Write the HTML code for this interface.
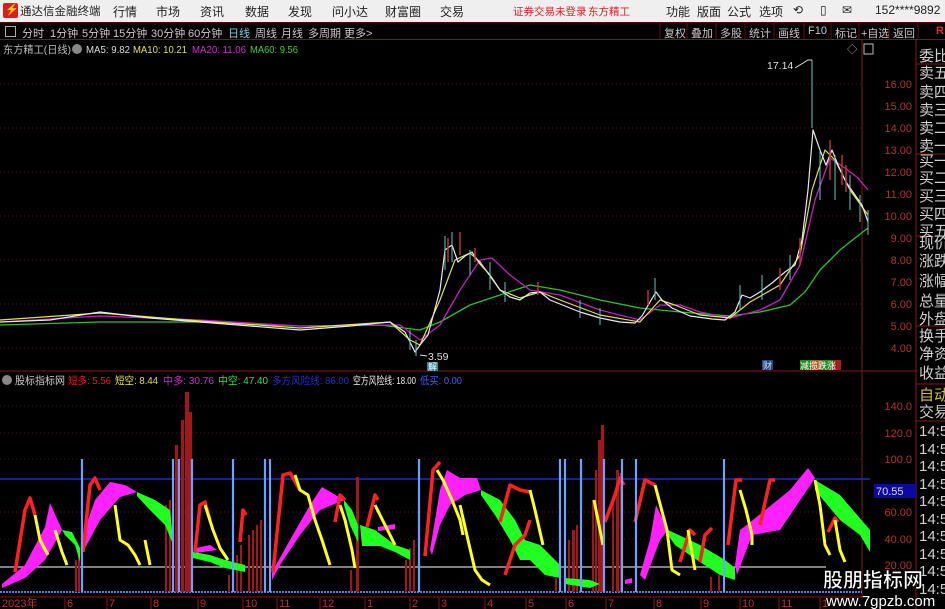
<!DOCTYPE html>
<html><head><meta charset="utf-8"><style>
*{margin:0;padding:0;box-sizing:border-box}
body{width:945px;height:609px;overflow:hidden;background:#000;font-family:"Liberation Sans","Noto Sans CJK SC",sans-serif;position:relative}
.top{position:absolute;left:0;top:0;width:945px;height:22px;background:#efefef;font-size:12px;color:#222}
.top span{position:absolute;top:3px;white-space:nowrap}
.tb{position:absolute;left:0;top:22px;width:945px;height:18px;background:#000;border-top:1px solid #600;border-bottom:1px solid #8a1010;font-size:11px;color:#c8c8c8}
.tb span{position:absolute;top:2px;white-space:nowrap}
svg{position:absolute;left:0;top:0}
</style></head><body>
<div class="top">
<div style="position:absolute;left:3px;top:3px;width:15px;height:15px;background:#d81e1e;border-radius:2px"></div>
<span style="left:5px;top:3px;color:#fff;font-weight:bold;font-size:11px">⚡</span>
<span style="left:20px;font-size:11.5px">通达信金融终端</span>
<span style="left:113px">行情</span><span style="left:156px">市场</span><span style="left:200px">资讯</span><span style="left:245px">数据</span><span style="left:288px">发现</span><span style="left:332px">问小达</span><span style="left:385px">财富圈</span><span style="left:440px">交易</span>
<span style="left:513px;color:#d82020;font-size:10.5px;top:4px">证券交易未登录</span><span style="left:588px;color:#d82020;font-size:10.5px;top:4px">东方精工</span>
<span style="left:666px">功能</span><span style="left:697px">版面</span><span style="left:727px">公式</span><span style="left:759px">选项</span>
<span style="left:793px">⟲</span><span style="left:820px">▯</span><span style="left:842px">✉</span>
<span style="left:875px">152****9892</span>
</div>
<div class="tb">
<span style="left:5px;top:3px;width:11px;height:11px;border:1px solid #aaa"></span>
<span style="left:22px">分时</span><span style="left:50px">1分钟</span><span style="left:82px">5分钟</span><span style="left:113px">15分钟</span><span style="left:151px">30分钟</span><span style="left:188px">60分钟</span><span style="left:228px;color:#7fd0e0">日线</span><span style="left:255px">周线</span><span style="left:281px">月线</span><span style="left:308px">多周期</span><span style="left:344px">更多&gt;</span>
<span style="left:664px">复权</span><span style="left:691px">叠加</span><span style="left:720px">多股</span><span style="left:749px">统计</span><span style="left:778px">画线</span><span style="left:808px">F10</span><span style="left:835px">标记</span><span style="left:861px">+自选</span><span style="left:893px">返回</span><span style="left:936px;color:#e03030;font-weight:bold">R</span>
</div>
<svg width="945" height="609" style="top:0" font-family="Liberation Sans, Noto Sans CJK SC, sans-serif">
<g stroke="#6a1010" stroke-width="1">
<line x1="660" y1="23" x2="660" y2="39"/><line x1="687" y1="23" x2="687" y2="39"/><line x1="716" y1="23" x2="716" y2="39"/><line x1="745" y1="23" x2="745" y2="39"/><line x1="774" y1="23" x2="774" y2="39"/><line x1="804" y1="23" x2="804" y2="39"/><line x1="831" y1="23" x2="831" y2="39"/><line x1="859" y1="23" x2="859" y2="39"/><line x1="889" y1="23" x2="889" y2="39"/><line x1="918" y1="23" x2="918" y2="39"/>
</g>
<g stroke="#8a1515" stroke-width="1" fill="none">
<line x1="862" y1="40" x2="862" y2="598"/><line x1="916" y1="40" x2="916" y2="609"/>
<line x1="0" y1="371" x2="916" y2="371"/><line x1="0" y1="597" x2="862" y2="597"/>
<line x1="916" y1="64" x2="945" y2="64"/><line x1="916" y1="154" x2="945" y2="154"/><line x1="916" y1="236" x2="945" y2="236"/><line x1="916" y1="326" x2="945" y2="326"/><line x1="916" y1="384" x2="945" y2="384"/><line x1="916" y1="421" x2="945" y2="421"/>
</g>
<g stroke="#5a1010" stroke-dasharray="1,3">
<line x1="0" y1="84" x2="862" y2="84"/><line x1="0" y1="128" x2="862" y2="128"/><line x1="0" y1="172" x2="862" y2="172"/><line x1="0" y1="216" x2="862" y2="216"/><line x1="0" y1="260" x2="862" y2="260"/><line x1="0" y1="304" x2="862" y2="304"/><line x1="0" y1="348" x2="862" y2="348"/>
<line x1="0" y1="406" x2="862" y2="406"/><line x1="0" y1="433" x2="862" y2="433"/><line x1="0" y1="459" x2="862" y2="459"/><line x1="0" y1="512" x2="862" y2="512"/><line x1="0" y1="539" x2="862" y2="539"/>
</g>
<g font-size="10.5">
<text x="3" y="53" fill="#bbb" textLength="68" lengthAdjust="spacingAndGlyphs">东方精工(日线)</text>
<circle cx="77" cy="49" r="5" fill="#888"/>
<text x="86" y="53" fill="#ddd" textLength="44" lengthAdjust="spacingAndGlyphs">MA5: 9.82</text>
<text x="133" y="53" fill="#e0e060" textLength="54" lengthAdjust="spacingAndGlyphs">MA10: 10.21</text>
<text x="192" y="53" fill="#d030d0" textLength="54" lengthAdjust="spacingAndGlyphs">MA20: 11.06</text>
<text x="250" y="53" fill="#40d040" textLength="48" lengthAdjust="spacingAndGlyphs">MA60: 9.56</text>
<text x="847" y="53" fill="#aaa">◇</text>
<rect x="864" y="44" width="9" height="10" fill="none" stroke="#bbb"/>
</g>
<g font-size="11" fill="#b83030" text-anchor="end">
<text x="912" y="88">16.00</text><text x="912" y="110">15.00</text><text x="912" y="132">14.00</text><text x="912" y="154">13.00</text><text x="912" y="176">12.00</text><text x="912" y="198">11.00</text><text x="912" y="220">10.00</text><text x="912" y="242">9.00</text><text x="912" y="264">8.00</text><text x="912" y="286">7.00</text><text x="912" y="308">6.00</text><text x="912" y="330">5.00</text><text x="912" y="352">4.00</text>
<text x="912" y="410">140.0</text><text x="912" y="437">120.0</text><text x="912" y="463">100.0</text><text x="912" y="516">60.00</text><text x="912" y="543">40.00</text><text x="912" y="569">20.00</text>
</g>
<rect x="874" y="484" width="42" height="14" fill="#0a0aa0"/>
<text x="876" y="495" font-size="11" fill="#ddd">70.55</text>
<g font-size="15" fill="#cfcfcf">
<text x="919" y="61">委比</text>
<text x="919" y="78">卖五</text><text x="919" y="97">卖四</text><text x="919" y="115">卖三</text><text x="919" y="133">卖二</text><text x="919" y="151">卖一</text>
<text x="919" y="166">买一</text><text x="919" y="183">买二</text><text x="919" y="201">买三</text><text x="919" y="219">买四</text><text x="919" y="236">买五</text>
<text x="919" y="248">现价</text><text x="919" y="266">涨跌</text><text x="919" y="286">涨幅</text><text x="919" y="306">总量</text><text x="919" y="324">外盘</text>
<text x="919" y="341">换手</text><text x="919" y="359">净资</text><text x="919" y="378">收益</text>
<text x="919" y="400" fill="#d0c040">自动</text><text x="919" y="417">交易</text>
<text x="919" y="436">14:56</text><text x="919" y="454">14:56</text><text x="919" y="471">14:56</text><text x="919" y="489">14:56</text><text x="919" y="506">14:56</text><text x="919" y="524">14:56</text><text x="919" y="541">14:56</text><text x="919" y="559">14:56</text><text x="919" y="576">14:56</text><text x="919" y="594">14:56</text>
</g>
<g fill="none" stroke-linejoin="round">
<polyline stroke="#30c030" stroke-width="1.3" points="0,325 100,322 200,322 300,326 380,325 420,330 440,322 470,305 500,295 530,285 560,290 600,300 640,308 680,312 730,316 760,312 790,305 805,292 820,270 840,250 855,238 868,228"/>
<polyline stroke="#c020c0" stroke-width="1.3" points="0,322 100,316 200,320 300,326 400,325 420,340 440,325 460,290 480,260 492,258 510,275 530,290 560,295 600,310 640,320 660,305 680,305 700,312 730,318 760,310 780,300 800,265 815,200 830,158 845,168 858,178 868,190"/>
<polyline stroke="#e0e050" stroke-width="1.2" points="0,320 100,313 200,321 300,328 390,322 410,340 420,345 440,300 455,260 470,253 480,262 500,290 520,298 540,292 560,300 600,315 640,322 660,300 675,305 700,315 730,318 750,302 780,285 800,255 812,190 825,150 835,160 850,190 868,215"/>
<polyline stroke="#e8e8e8" stroke-width="1.2" points="0,322 50,320 100,312 150,318 200,322 250,326 300,330 350,326 390,322 405,332 415,352 420,345 428,335 440,290 445,250 452,245 458,262 465,256 472,252 480,264 490,275 500,290 510,297 520,300 530,293 540,292 550,300 565,306 580,312 600,318 620,322 635,323 642,316 650,302 656,292 662,300 672,308 690,316 712,319 725,320 735,312 742,295 750,298 760,292 772,283 785,272 795,265 802,240 808,190 813,130 820,150 826,165 832,150 838,165 846,182 855,195 862,205 868,222"/>
<path stroke="#60c8c8" stroke-width="1" d="M812,60V128 M445,236V270 M452,232V262 M470,250V275 M490,262V290 M505,282V302 M580,300V318 M600,308V325 M655,278V300 M740,285V310 M762,275V300 M790,255V280 M820,150V200 M835,155V200 M850,175V210 M860,195V222 M868,210V235 M416,340V356 M410,330V350"/>
<path stroke="#c03030" stroke-width="1.5" d="M448,238V262 M460,232V255 M475,248V262 M538,282V295 M648,290V305 M800,238V265 M830,140V180 M842,155V185 M846,165V192 M780,268V290"/>
</g>
<g stroke="#ddd" stroke-width="1" fill="none"><polyline points="795,68 808,60 812,60"/><polyline points="420,355 427,356"/></g>
<text x="767" y="69" font-size="10.5" fill="#ddd">17.14</text>
<text x="428" y="360" font-size="10.5" fill="#ddd">3.59</text>
<rect x="427" y="362" width="11" height="9" fill="#2a8a9a"/><text x="428" y="370" font-size="9" fill="#fff">解</text>
<rect x="762" y="360" width="11" height="10" fill="#204a8a"/><text x="763" y="369" font-size="9" fill="#ddd">财</text>
<rect x="800" y="360" width="11" height="10" fill="#208a20"/><rect x="811" y="360" width="11" height="10" fill="#a06020"/><rect x="822" y="360" width="11" height="10" fill="#208a20"/><rect x="833" y="360" width="8" height="10" fill="#a02020"/>
<text x="800" y="369" font-size="9" fill="#fff">减揽跌涨</text>
<g font-size="10.5">
<circle cx="7" cy="380" r="5" fill="#888"/>
<text x="15" y="384" fill="#ccc" textLength="50" lengthAdjust="spacingAndGlyphs">股标指标网</text>
<text x="68" y="384" fill="#e02020" textLength="43" lengthAdjust="spacingAndGlyphs">短多: 5.56</text>
<text x="115" y="384" fill="#e0e050" textLength="43" lengthAdjust="spacingAndGlyphs">短空: 8.44</text>
<text x="163" y="384" fill="#d030d0" textLength="51" lengthAdjust="spacingAndGlyphs">中多: 30.76</text>
<text x="218" y="384" fill="#40e040" textLength="50" lengthAdjust="spacingAndGlyphs">中空: 47.40</text>
<text x="272" y="384" fill="#2030d0" textLength="77" lengthAdjust="spacingAndGlyphs">多方风险线: 86.00</text>
<text x="353" y="384" fill="#eee" textLength="63" lengthAdjust="spacingAndGlyphs">空方风险线: 18.00</text>
<text x="420" y="384" fill="#4060ff" textLength="42" lengthAdjust="spacingAndGlyphs">低买: 0.00</text>
</g>
<line x1="0" y1="479" x2="870" y2="479" stroke="#1830c0" stroke-width="1.5"/>
<line x1="0" y1="567" x2="826" y2="567" stroke="#ccc" stroke-width="1.2"/>
<line x1="0" y1="592" x2="862" y2="592" stroke="#5a80d0" stroke-width="2" stroke-dasharray="2,1"/>
<g fill="#a01818">
<rect x="75" y="560" width="2" height="32"/><rect x="78" y="555" width="2" height="37"/>
<rect x="165" y="505" width="2" height="87"/><rect x="169" y="500" width="2" height="92"/><rect x="175" y="445" width="3" height="147"/><rect x="181" y="420" width="3" height="172"/><rect x="185" y="392" width="4" height="200"/><rect x="189" y="412" width="3" height="180"/>
<rect x="228" y="575" width="2" height="17"/><rect x="236" y="555" width="2" height="37"/><rect x="240" y="545" width="2" height="47"/><rect x="248" y="535" width="2" height="57"/><rect x="252" y="530" width="2" height="62"/><rect x="256" y="525" width="2" height="67"/><rect x="260" y="520" width="2" height="72"/>
<rect x="356" y="477" width="3" height="115"/><rect x="350" y="570" width="2" height="22"/>
<rect x="405" y="560" width="2" height="32"/><rect x="409" y="548" width="2" height="44"/><rect x="413" y="540" width="2" height="52"/>
<rect x="555" y="578" width="2" height="14"/><rect x="568" y="540" width="2" height="52"/><rect x="572" y="530" width="3" height="62"/><rect x="576" y="525" width="2" height="67"/>
<rect x="592" y="500" width="2" height="92"/><rect x="595" y="470" width="2" height="122"/><rect x="598" y="440" width="3" height="152"/><rect x="601" y="425" width="3" height="167"/>
<rect x="612" y="500" width="2" height="92"/><rect x="616" y="470" width="3" height="122"/><rect x="620" y="473" width="2" height="119"/>
<rect x="710" y="577" width="2" height="15"/><rect x="718" y="575" width="2" height="17"/>
</g>
<g fill="#ff20ff">
<polygon points="2,584 25,565 45,527 50,503 62,530 45,560 25,578 2,588"/>
<polygon points="83,535 95,500 110,482 125,485 137,492 120,497 100,520 85,548"/>
<polygon points="196,548 210,545 217,550 196,553"/>
<polygon points="272,572 290,540 310,505 322,487 344,500 320,510 300,535 280,565 272,580"/>
<polygon points="378,527 395,524 395,529 378,531"/>
<polygon points="430,550 440,490 447,470 460,478 477,478 481,490 465,495 450,505 440,525 432,555"/>
<polygon points="625,580 632,578 632,583 625,584"/>
<polygon points="640,575 650,540 656,505 668,530 660,540 645,580"/>
<polygon points="735,565 740,530 748,524 790,490 808,468 815,478 780,530 752,535 737,575"/>
</g>
<g fill="#20ff20">
<polygon points="62,530 72,532 80,548 80,562 75,545 65,535"/>
<polygon points="137,492 155,500 170,510 172,530 172,542 165,525 150,510 137,496"/>
<polygon points="193,552 210,555 225,560 245,565 245,572 225,568 210,562 193,558"/>
<polygon points="344,500 352,510 358,525 358,542 350,525 344,505"/>
<polygon points="360,525 375,530 395,545 410,550 410,560 395,552 380,546 362,546"/>
<polygon points="481,490 500,500 515,520 525,540 540,545 560,565 560,578 545,575 530,560 520,560 510,540 495,515 481,495"/>
<polygon points="565,578 590,580 600,584 590,588 565,584"/>
<polygon points="668,530 700,545 725,560 735,568 735,580 720,575 700,562 675,545 668,535"/>
<polygon points="815,480 840,495 870,530 870,552 860,535 840,520 815,490"/>
</g>
<g fill="none" stroke="#ff2020" stroke-width="3.5" stroke-linejoin="round">
<polyline points="15,572 25,510 30,498 35,515"/>
<polyline points="83,552 90,485 95,478 100,490"/>
<polyline points="195,552 200,505 205,502 210,520"/>
<polyline points="240,542 243,510 246,515"/>
<polyline points="273,572 283,475 290,473 300,490"/>
<polyline points="335,522 340,495 345,500"/>
<polyline points="367,527 375,495 378,500"/>
<polyline points="425,556 433,470 440,462"/>
<polyline points="500,522 510,485 520,490 530,492"/>
<polyline points="505,575 515,545 525,535 530,520"/>
<polyline points="605,522 615,495 620,478 624,485"/>
<polyline points="635,522 645,480 655,485"/>
<polyline points="680,562 690,530 695,535"/>
<polyline points="700,562 705,535 712,528"/>
<polyline points="728,545 736,480 742,480"/>
<polyline points="760,525 770,480 775,480"/>
<polyline points="828,532 835,518 838,522"/>
</g>
<g fill="none" stroke="#ffff20" stroke-width="3" stroke-linejoin="round">
<polyline points="35,515 40,540 48,555"/><polyline points="55,530 62,552 67,565"/>
<polyline points="115,505 120,540 128,545 135,555 140,565"/><polyline points="145,540 150,565"/>
<polyline points="205,505 213,530 220,548 228,560"/>
<polyline points="295,475 300,490 308,495 315,520 322,540 330,565"/>
<polyline points="340,505 345,520 352,550 355,568"/>
<polyline points="375,505 385,525 395,545"/>
<polyline points="437,470 443,480 452,500 460,520 463,535"/>
<polyline points="460,505 468,540 475,570 482,580 490,585"/>
<polyline points="530,490 535,510 543,545"/>
<polyline points="594,500 598,520 603,545"/>
<polyline points="655,485 667,530 672,570 680,575"/>
<polyline points="688,530 695,570"/>
<polyline points="740,490 746,510 752,535 752,545"/>
<polyline points="815,480 820,505 825,545 830,555"/>
<polyline points="835,520 840,550 845,562"/>
</g>
<g stroke="#70a0ff" stroke-width="2.2">
<line x1="82" y1="459" x2="82" y2="592"/><line x1="173" y1="459" x2="173" y2="592"/><line x1="179" y1="459" x2="179" y2="592"/><line x1="192" y1="459" x2="192" y2="592"/><line x1="233" y1="459" x2="233" y2="592"/><line x1="265" y1="459" x2="265" y2="592"/><line x1="270" y1="459" x2="270" y2="592"/><line x1="419" y1="459" x2="419" y2="592"/>
<line x1="560" y1="459" x2="560" y2="592"/><line x1="565" y1="459" x2="565" y2="592"/><line x1="581" y1="459" x2="581" y2="592"/><line x1="604" y1="459" x2="604" y2="592"/><line x1="622" y1="459" x2="622" y2="592"/><line x1="636" y1="459" x2="636" y2="592"/><line x1="724" y1="459" x2="724" y2="592"/>
</g>
<g font-size="11" fill="#c03030">
<text x="2" y="607">2023年</text><text x="67" y="607">6</text><text x="109" y="607">7</text><text x="153" y="607">8</text><text x="200" y="607">9</text><text x="245" y="607">10</text><text x="279" y="607">11</text><text x="322" y="607">12</text><text x="367" y="607">1</text><text x="412" y="607">2</text><text x="441" y="607">3</text><text x="487" y="607">4</text><text x="528" y="607">5</text><text x="568" y="607">6</text><text x="608" y="607">7</text><text x="656" y="607">8</text><text x="703" y="607">9</text><text x="742" y="607">10</text><text x="781" y="607">11</text><text x="822" y="607">1</text>
</g>
<g stroke="#8a1515"><line x1="65" y1="598" x2="65" y2="609"/><line x1="107" y1="598" x2="107" y2="609"/><line x1="151" y1="598" x2="151" y2="609"/><line x1="198" y1="598" x2="198" y2="609"/><line x1="243" y1="598" x2="243" y2="609"/><line x1="277" y1="598" x2="277" y2="609"/><line x1="320" y1="598" x2="320" y2="609"/><line x1="365" y1="598" x2="365" y2="609"/><line x1="410" y1="598" x2="410" y2="609"/><line x1="439" y1="598" x2="439" y2="609"/><line x1="485" y1="598" x2="485" y2="609"/><line x1="526" y1="598" x2="526" y2="609"/><line x1="566" y1="598" x2="566" y2="609"/><line x1="606" y1="598" x2="606" y2="609"/><line x1="654" y1="598" x2="654" y2="609"/><line x1="701" y1="598" x2="701" y2="609"/><line x1="740" y1="598" x2="740" y2="609"/><line x1="779" y1="598" x2="779" y2="609"/><line x1="820" y1="598" x2="820" y2="609"/></g>
<text x="823" y="587" font-size="20" font-weight="bold" fill="#fff" stroke="#000" stroke-width="0.6">股朋指标网</text>
<text x="826" y="606" font-size="15" fill="#fff">www.7gpzb.com</text>
</svg>
</body></html>
